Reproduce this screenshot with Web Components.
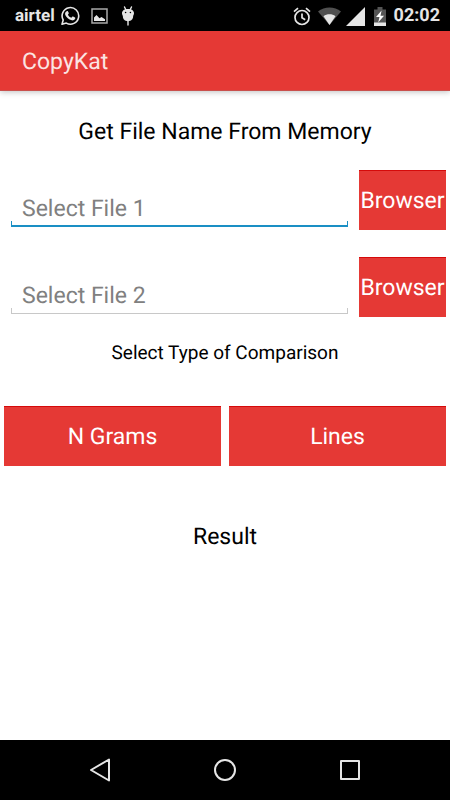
<!DOCTYPE html>
<html lang="en">
<head>
<meta charset="utf-8">
<meta name="viewport" content="width=device-width, initial-scale=1">
<title>CopyKat</title>
<style>
  html, body { margin: 0; height: 100%; background: #fff; font-family: Roboto, "Liberation Sans", sans-serif; color: #000; text-rendering: geometricPrecision; }
</style>
</head>
<body>
<copykat-app></copykat-app>
<script>
const define = (name, html, setup) => {
  const template = document.createElement('template');
  template.innerHTML = html;
  customElements.define(name, class extends HTMLElement {
    constructor() {
      super();
      this.attachShadow({ mode: 'open' }).append(template.content.cloneNode(true));
    }
    connectedCallback() { if (setup) setup(this, this.shadowRoot); }
  });
};

define('status-bar', `
<style>
  :host { display: flex; justify-content: space-between; align-items: center; height: 31px; box-sizing: border-box; padding: 1px 10px 0 15px; background: #000; color: #e6e6e6; font-weight: 700; line-height: 20px; }
  div { display: flex; align-items: center; }
  .carrier { font-size: 17px; margin-right: 5px; }
  .clock { font-size: 18px; margin-left: 8px; }
  svg { display: block; fill: none; }
  .photo { margin: 0 13px 0 11px; }
  .wifi { margin-left: 7px; }
  .signal { margin: 0 9px 0 5px; }
</style>
<div>
  <span class="carrier">airtel</span>
  <svg width="20" height="20" viewBox="0 0 20 20" aria-label="WhatsApp">
    <path d="M2 18.300L3.200 14A8.300 8.300 0 1 1 6.300 17.100Z" stroke="#e6e6e6" stroke-width="1.600" stroke-linejoin="round"/>
    <path d="M6.700 5.200c.4-.3 1-.3 1.300.2l.8 1.700c.1.400 0 .700-.9 1.600.8 1.500 1.900 2.500 3.500 3.100l1-1.200c.2-.2.400-.3.700-.1l1.900.9c.4.200.3 1.100 0 1.700-.6 1-2 1.500-3.200 1.200-3.200-.8-5.300-2.800-6.500-5.400-.5-1.400-.1-2.900 1.400-3.700z" fill="#e6e6e6"/>
  </svg>
  <svg class="photo" width="17" height="16" viewBox="0 0 17 16" aria-label="Picture">
    <rect x="1" y="1" width="15" height="14" stroke="#a8a8a8" stroke-width="1.500"/>
    <path d="M3 13V9.500L5.500 7l3 3.200 2-1.300 3.500 2.300V13z" fill="#e6e6e6"/>
  </svg>
  <svg width="14" height="20" viewBox="0 0 14 20" aria-label="Debugging">
    <path d="M3.500 1L5 4M10.500 1L9 4M7 14v5" stroke="#e6e6e6" stroke-width="1.400" stroke-linecap="round"/>
    <path d="M1 7.200C1 4.500 3.500 3 7 3s6 1.500 6 4.200c0 1.500-.9 2-.9 3.300 0 2.700-2 4.700-5.100 4.700s-5.100-2-5.100-4.700c0-1.300-.9-1.800-.9-3.300z" fill="#e6e6e6"/>
    <circle cx="4.600" cy="6.500" r=".8" fill="#000"/><circle cx="9.400" cy="6.500" r=".8" fill="#000"/>
  </svg>
</div>
<div>
  <svg width="18" height="19" viewBox="0 0 18 19" stroke="#e6e6e6" stroke-width="1.700" aria-label="Alarm">
    <circle cx="9" cy="10.500" r="7"/><path d="M1 4.600L5 1.200M13 1.200l4 3.400M9 6.500v4.300l3.200 2"/>
  </svg>
  <svg class="wifi" width="23" height="18" viewBox="0 0 23 18" aria-label="Wi-Fi">
    <path d="M0 4.500C6.500-.7 16.500-.7 23 4.500L11.500 18z" fill="#505050"/>
    <path d="M5.500 9.300c3.400-2.600 8.600-2.600 12 0L11.500 18z" fill="#e6e6e6"/>
  </svg>
  <svg class="signal" width="19" height="19" viewBox="0 0 19 19" aria-label="Signal"><path d="M19 0V19H0z" fill="#e6e6e6"/></svg>
  <svg width="12" height="19" viewBox="0 0 12 19" aria-label="Battery charging">
    <path d="M0 2.500h3.500V0h5v2.500H12V19H0z" fill="#555"/><path d="M0 15.500h12V19H0z" fill="#e6e6e6"/>
    <path d="M7.600 3.500L2 10h3.500L4.200 15.500 10 8.800H6.500z" fill="#fff"/>
  </svg>
  <span class="clock">02:02</span>
</div>`);

define('app-bar', `
<style>
  :host { display: flex; align-items: center; height: 60px; box-sizing: border-box; padding: 3px 22px 0; background: #e53935; color: #fbe4e3; border-bottom: 1px solid #c9504d; box-shadow: 0 1px 6px rgba(0,0,0,.25); margin-bottom: 1px; }
  h1 { margin: 0; font-size: 23px; line-height: 28px; font-weight: 400; }
</style>
<h1><slot></slot></h1>`);

define('red-button', `
<style>
  :host { display: block; min-width: 0; }
  button { display: block; width: 100%; height: 60px; margin: 0; padding: 1px 0 0; border: 0; border-top: 1px solid #d50a0a; border-radius: 0; background: #e53935; color: #fff; font: 400 23px/28px Roboto, "Liberation Sans", sans-serif; text-rendering: inherit; text-align: center; white-space: nowrap; cursor: pointer; }
</style>
<button type="button"><slot></slot></button>`);

define('file-field', `
<style>
  :host { display: grid; grid-template-columns: minmax(0, 1fr) 87px; column-gap: 11px; align-items: end; padding: 0 4px 0 11px; --line: #c8c8c8; --weight: 1px; }
  :host([active]) { --line: #1a8fc4; --weight: 2px; }
  input { box-sizing: border-box; width: 100%; height: 40px; margin: 0 0 3px; padding: 2px 11px 0; border: 0; outline: 0; border-radius: 0; color: #000; font: 400 23px/28px Roboto, "Liberation Sans", sans-serif; text-rendering: inherit;
    background: linear-gradient(var(--line), var(--line)) left bottom / 1px 6px no-repeat, linear-gradient(var(--line), var(--line)) right bottom / 1px 6px no-repeat, linear-gradient(var(--line), var(--line)) left bottom / 100% var(--weight) no-repeat; }
  input::placeholder { color: #808080; opacity: 1; }
</style>
<input type="text">
<red-button>Browser</red-button>`, (host, root) => {
  const input = root.querySelector('input');
  input.placeholder = host.getAttribute('label');
  input.setAttribute('aria-label', host.getAttribute('label'));
});

define('nav-bar', `
<style>
  :host { display: block; background: #000; }
  nav { display: flex; justify-content: center; height: 60px; }
  button { flex: 0 1 125px; display: grid; place-items: center; padding: 0; border: 0; background: none; cursor: pointer; }
  svg { fill: none; stroke: #e6e6e6; stroke-width: 2; stroke-linejoin: round; }
</style>
<nav>
  <button type="button" aria-label="Back"><svg width="24" height="24" viewBox="0 0 24 24"><path d="M3 12L21 1.500v21z"/></svg></button>
  <button type="button" aria-label="Home"><svg width="24" height="24" viewBox="0 0 24 24"><circle cx="12" cy="12" r="10"/></svg></button>
  <button type="button" aria-label="Overview"><svg width="24" height="24" viewBox="0 0 24 24"><path d="M3 3h18v18H3z"/></svg></button>
</nav>`);

define('copykat-app', `
<style>
  :host { display: flex; flex-direction: column; min-height: 100vh; }
  main { flex: 1; display: flex; flex-direction: column; }
  h2 { margin: 25px 0 24px; font-size: 23px; line-height: 29px; font-weight: 400; text-align: center; }
  .files { display: grid; row-gap: 27px; }
  p { margin: 23px 0 41px; font-size: 19px; line-height: 25px; text-align: center; }
  .types { display: grid; grid-template-columns: 1fr 1fr; column-gap: 8px; padding: 0 4px; }
  .result { margin: 56px 0 24px; }
</style>
<status-bar></status-bar>
<app-bar>CopyKat</app-bar>
<main>
  <h2>Get File Name From Memory</h2>
  <div class="files">
    <file-field label="Select File 1" active></file-field>
    <file-field label="Select File 2"></file-field>
  </div>
  <p>Select Type of Comparison</p>
  <div class="types">
    <red-button>N Grams</red-button>
    <red-button>Lines</red-button>
  </div>
  <h2 class="result">Result</h2>
</main>
<nav-bar></nav-bar>`);
</script>
</body>
</html>
